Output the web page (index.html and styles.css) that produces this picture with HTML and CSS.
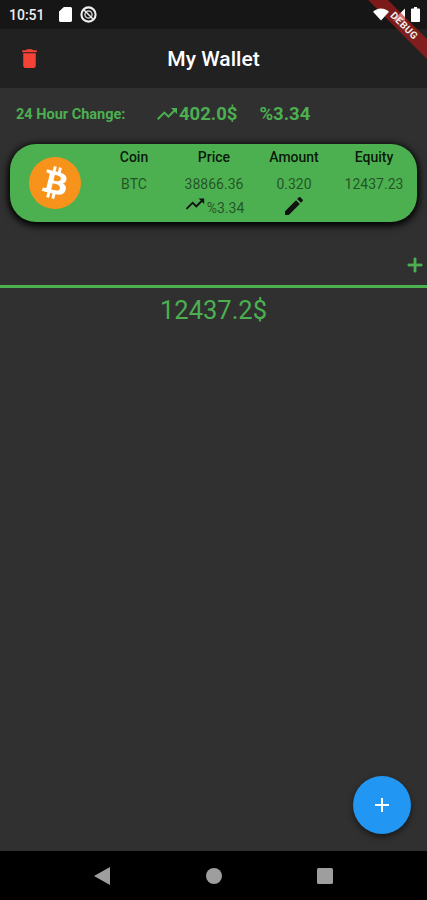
FILE: index.html
```html
<!DOCTYPE html>
<html lang="en">
<head>
  <meta charset="UTF-8">
  <title>My Wallet</title>
  <link rel="stylesheet" href="styles.css">
</head>
<body>
<div class="phone">
  <div class="status-bar">
    <span class="clock">10:51</span>
    <svg class="status-icon sd" viewBox="4 2 16 20" preserveAspectRatio="none"><path d="M18 2h-8L4 8v12c0 1.100.9 2 2 2h12c1.100 0 2-.9 2-2V4c0-1.100-.9-2-2-2z"/></svg>
    <svg class="status-icon sync" viewBox="0 0 24 24">
      <circle cx="12" cy="12" r="10" fill="none" stroke="#eee" stroke-width="3"/>
      <circle cx="12" cy="12" r="5" fill="none" stroke="#ccc" stroke-width="2"/>
      <path d="M5 5l14 14" stroke="#eee" stroke-width="2"/>
    </svg>
    <span class="spacer"></span>
    <svg class="status-icon wifi" viewBox="0 0 24 18"><path d="M12 18L0 5c3-3 7.400-5 12-5s9 2 12 5z"/></svg>
    <svg class="status-icon signal" viewBox="0 0 16 16"><path d="M16 0v16H0z"/></svg>
    <svg class="status-icon battery" viewBox="0 0 12 20" preserveAspectRatio="none"><path d="M4 0h4v2h2.500c.8 0 1.500.7 1.500 1.500V18.500c0 .8-.7 1.500-1.500 1.500h-9C.7 20 0 19.300 0 18.500V3.500C0 2.700.7 2 1.500 2H4z"/></svg>
  </div>

  <header class="app-bar">
    <svg class="delete-icon" viewBox="0 0 24 24"><path d="M6 19c0 1.100.9 2 2 2h8c1.100 0 2-.9 2-2V7H6v12zM19 4h-3.500l-1-1h-5l-1 1H5v2h14V4z"/></svg>
    <h1 class="title">My Wallet</h1>
  </header>

  <div class="debug-banner">DEBUG</div>

  <main class="content">
    <div class="change-row">
      <span class="change-label">24 Hour Change:</span>
      <svg class="trend-icon" viewBox="0 0 24 24"><path d="M16 6l2.290 2.290-4.880 4.880-4-4L2 16.590 3.410 18l6-6 4 4 6.300-6.290L22 12V6z"/></svg>
      <span class="change-value">402.0$</span>
      <span class="change-value percent">%3.34</span>
    </div>

    <section class="coin-card">
      <svg class="coin-logo" viewBox="0 0 64 64">
        <circle cx="32" cy="32" r="32" fill="#f7931a"/>
        <path fill="#fff" d="M46.103 27.444c.637-4.258-2.605-6.547-7.038-8.074l1.438-5.768-3.511-.875-1.400 5.616c-.923-.23-1.871-.447-2.813-.662l1.410-5.653-3.509-.875-1.439 5.766c-.764-.174-1.514-.346-2.242-.527l.004-.018-4.842-1.209-.934 3.750s2.605.597 2.550.634c1.422.355 1.679 1.296 1.636 2.042l-1.638 6.571c.098.025.225.061.365.117l-.371-.092-2.296 9.205c-.174.432-.615 1.080-1.609.834.035.051-2.552-.637-2.552-.637l-1.743 4.019 4.569 1.139c.85.213 1.683.436 2.503.646l-1.453 5.834 3.507.875 1.439-5.772c.958.26 1.888.5 2.798.726l-1.434 5.745 3.511.875 1.453-5.823c5.987 1.133 10.489.676 12.384-4.739 1.527-4.360-.076-6.875-3.226-8.515 2.294-.529 4.022-2.038 4.483-5.155zM38.080 38.695c-1.085 4.360-8.426 2.003-10.806 1.412l1.928-7.729c2.380.594 10.012 1.770 8.878 6.317zm1.086-11.314c-.99 3.966-7.100 1.951-9.082 1.457l1.748-7.010c1.982.494 8.365 1.416 7.334 5.553z"/>
      </svg>
      <div class="coin-grid">
        <span class="head">Coin</span>
        <span class="head">Price</span>
        <span class="head">Amount</span>
        <span class="head">Equity</span>
        <span class="cell">BTC</span>
        <span class="cell">38866.36</span>
        <span class="cell">0.320</span>
        <span class="cell">12437.23</span>
        <span></span>
        <span class="cell price-change">
          <svg class="small-trend" viewBox="0 0 24 24"><path d="M16 6l2.290 2.290-4.880 4.880-4-4L2 16.590 3.410 18l6-6 4 4 6.300-6.290L22 12V6z"/></svg>%3.34
        </span>
        <span class="cell">
          <svg class="edit-icon" viewBox="0 0 24 24"><path d="M3 17.250V21h3.750L17.810 9.940l-3.750-3.750L3 17.250zM20.710 7.040c.39-.39.39-1.020 0-1.410l-2.340-2.340c-.39-.39-1.020-.39-1.410 0l-1.830 1.830 3.750 3.750 1.830-1.830z"/></svg>
        </span>
        <span></span>
      </div>
    </section>

    <div class="add-row">
      <svg class="add-icon" viewBox="0 0 24 24"><path d="M19 13h-6v6h-2v-6H5v-2h6V5h2v6h6v2z"/></svg>
    </div>
    <div class="divider"></div>
    <div class="total">12437.2$</div>

    <button class="fab">
      <svg viewBox="0 0 24 24"><path d="M19 13h-6v6h-2v-6H5v-2h6V5h2v6h6v2z"/></svg>
    </button>
  </main>

  <nav class="nav-bar">
    <svg class="nav-icon" viewBox="0 0 16 18"><path d="M16 0v18L0 9z"/></svg>
    <svg class="nav-icon" viewBox="0 0 16 16"><circle cx="8" cy="8" r="8"/></svg>
    <svg class="nav-icon" viewBox="0 0 16 16"><rect width="16" height="16" rx="1.500"/></svg>
  </nav>
</div>
</body>
</html>
```

FILE: styles.css
```css
* {
  margin: 0;
  padding: 0;
  box-sizing: border-box;
}

body {
  font-family: Roboto, "Liberation Sans", sans-serif;
  background: #303030;
  overflow: hidden;
}

.phone {
  position: relative;
  width: 427px;
  height: 900px;
  display: flex;
  flex-direction: column;
  overflow: hidden;
}

/* status bar */
.status-bar {
  height: 29px;
  background: #161616;
  display: flex;
  align-items: center;
  padding: 0 7px 0 9px;
  color: #fff;
}

.clock {
  font-size: 14px;
  font-weight: 500;
  margin-right: 14px;
  color: #eee;
}

.status-icon {
  fill: #fff;
  display: block;
}

.sd {
  width: 13px;
  height: 15px;
  margin-right: 8px;
}

.sync {
  width: 17px;
  height: 17px;
}

.spacer {
  flex: 1;
}

/* the wifi glyph stays white where the ribbon crosses it */
.wifi {
  position: relative;
  z-index: 2;
  width: 16px;
  height: 13px;
  margin-right: 4px;
}

.signal {
  width: 12px;
  height: 13px;
  margin-right: 6px;
}

.battery {
  width: 9px;
  height: 15px;
}

.debug-banner {
  position: absolute;
  top: 19px;
  left: 359px;
  width: 90px;
  height: 14px;
  background: rgba(183, 28, 28, .63);
  color: #eee;
  font-size: 10px;
  font-weight: 700;
  line-height: 14px;
  text-align: center;
  letter-spacing: .5px;
  transform: rotate(45deg);
}

/* app bar */
.app-bar {
  position: relative;
  height: 59px;
  background: #212121;
  display: flex;
  align-items: center;
  justify-content: center;
}

.delete-icon {
  position: absolute;
  left: 17px;
  top: 17px;
  width: 25px;
  height: 25px;
  fill: #f44336;
}

.title {
  font-size: 21px;
  font-weight: 500;
  color: #fff;
}

/* content */
.content {
  position: relative;
  flex: 1;
  display: flex;
  flex-direction: column;
  background: #303030;
}

.change-row {
  height: 52px;
  display: flex;
  align-items: center;
  padding-left: 16px;
  color: #4caf50;
}

.change-label {
  width: 139px;
  font-size: 14.5px;
  font-weight: 700;
}

.trend-icon {
  width: 24px;
  height: 24px;
  fill: #4caf50;
}

.change-value {
  font-size: 18.5px;
  font-weight: 700;
}

.percent {
  margin-left: 22px;
}

.coin-card {
  margin: 4px 10px 0;
  height: 78px;
  background: #4caf50;
  border-radius: 26px;
  box-shadow: 0 2px 7px 2px #000;
  display: flex;
  align-items: center;
  padding-left: 19px;
}

.coin-logo {
  width: 52px;
  height: 52px;
  flex: none;
}

.coin-grid {
  align-self: flex-start;
  margin-left: 13px;
  width: 320px;
  display: grid;
  grid-template-columns: repeat(4, 80px);
  grid-template-rows: 26px 28px 20px;
  justify-items: center;
  align-items: center;
}

.head {
  font-size: 14px;
  font-weight: 500;
  color: rgba(0, 0, 0, .87);
}

.cell {
  font-size: 14px;
  color: rgba(0, 0, 0, .54);
  display: flex;
  align-items: center;
}

.small-trend {
  width: 22px;
  height: 22px;
  fill: #111;
  margin-top: -8px;
  margin-right: 1px;
}

.edit-icon {
  width: 24px;
  height: 24px;
  fill: #111;
  margin-top: -4px;
}

.add-row {
  height: 63px;
  display: flex;
  justify-content: flex-end;
  align-items: flex-end;
}

.add-icon {
  width: 24px;
  height: 24px;
  fill: #4caf50;
  stroke: #4caf50;
  stroke-width: .8;
  margin-bottom: 8px;
}

.divider {
  height: 3px;
  background: #4caf50;
}

.total {
  margin-top: 7px;
  font-size: 25.5px;
  text-align: center;
  color: #4caf50;
}

.fab {
  position: absolute;
  left: 353px;
  top: 688px;
  width: 58px;
  height: 58px;
  border: none;
  border-radius: 50%;
  background: #2196f3;
  box-shadow: 0 3px 6px rgba(0, 0, 0, .5);
  display: flex;
  align-items: center;
  justify-content: center;
}

.fab svg {
  width: 24px;
  height: 24px;
  fill: #fff;
}

/* navigation */
.nav-bar {
  height: 49px;
  background: #000;
  display: flex;
  align-items: center;
  position: relative;
}

.nav-icon {
  position: absolute;
  fill: #9e9e9e;
}

.nav-icon:nth-child(1) {
  left: 94px;
  top: 16px;
  width: 16px;
  height: 18px;
}

.nav-icon:nth-child(2) {
  left: 206px;
  top: 17px;
  width: 16px;
  height: 16px;
}

.nav-icon:nth-child(3) {
  left: 317px;
  top: 17px;
  width: 16px;
  height: 16px;
}
```
